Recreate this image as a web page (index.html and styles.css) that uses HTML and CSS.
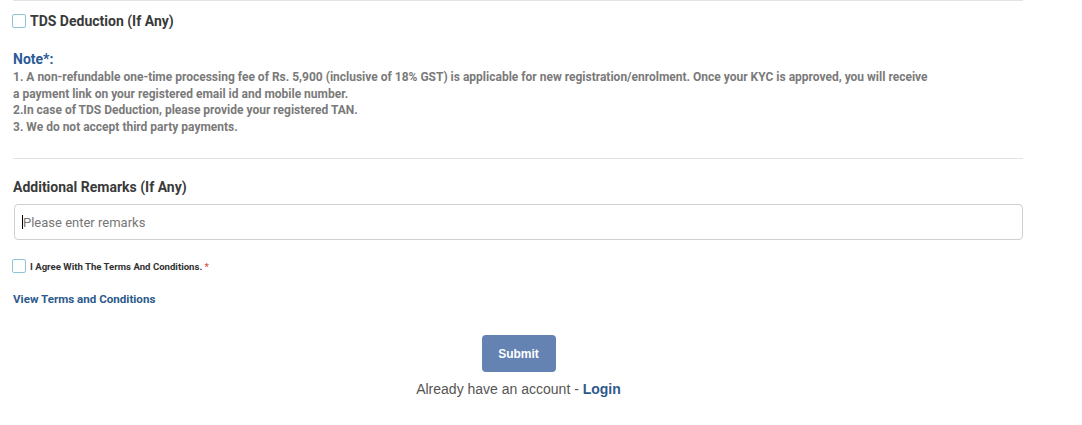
FILE: index.html
```html
<!DOCTYPE html>
<html>
<head>
<meta charset="utf-8">
<link rel="stylesheet" href="styles.css">
</head>
<body>
<div class="form">
  <hr class="rule rule-top">
  <label class="check-row tds">
    <span class="box"></span>
    <span class="tds-label">TDS Deduction (If Any)</span>
  </label>
  <div class="note">
    <h4 class="note-title">Note*:</h4>
    <p class="note-text">1. A non-refundable one-time processing fee of Rs. 5,900 (inclusive of 18% GST) is applicable for new registration/enrolment. Once your KYC is approved, you will receive<br>a payment link on your registered email id and mobile number.<br>2.In case of TDS Deduction, please provide your registered TAN.<br>3. We do not accept third party payments.</p>
  </div>
  <hr class="rule rule-mid">
  <div class="remarks">
    <label class="remarks-label">Additional Remarks (If Any)</label>
    <div class="input"><span class="caret"></span><span class="placeholder">Please enter remarks</span></div>
  </div>
  <label class="check-row agree">
    <span class="box"></span>
    <span class="agree-label">I Agree With The Terms And Conditions. <span class="req">*</span></span>
  </label>
  <a class="terms-link">View Terms and Conditions</a>
  <div class="actions">
    <button class="submit">Submit</button>
    <p class="login-line">Already have an account - <a class="login">Login</a></p>
  </div>
</div>
</body>
</html>
```
FILE: styles.css
```css
html, body {
  margin: 0;
  padding: 0;
  background: #fff;
}
.form {
  width: 1010px;
  margin-left: 13px;
  font-family: Roboto, "Liberation Sans", sans-serif;
}
.rule {
  border: 0;
  margin: 0;
  height: 1px;
  background: #e3e3e3;
}
.check-row {
  display: flex;
  align-items: center;
}
.box {
  box-sizing: border-box;
  width: 14px;
  height: 14px;
  border: 1px solid #8fc3da;
  border-radius: 2px;
  margin-left: -1px;
  margin-right: 4px;
  background: #fff;
}
.tds {
  margin-top: 12px;
  height: 16px;
}
.tds-label {
  font-size: 14px;
  font-weight: 700;
  color: #3a3a3a;
}
.note {
  margin-top: 22px;
}
.note-title {
  margin: 0;
  font-size: 14px;
  font-weight: 700;
  color: #2d5a96;
  line-height: 16px;
}
.note-text {
  margin: 2px 0 0;
  font-size: 12px;
  font-weight: 700;
  color: #7a7a7a;
  line-height: 16.5px;
}
.rule-mid {
  margin-top: 23px;
}
.remarks {
  margin-top: 20px;
}
.remarks-label {
  display: block;
  font-size: 14px;
  font-weight: 700;
  color: #3a3a3a;
  line-height: 16px;
}
.input {
  box-sizing: border-box;
  margin-top: 9px;
  margin-left: 1px;
  height: 36px;
  border: 1px solid #d0d0d0;
  border-radius: 4px;
  display: flex;
  align-items: center;
  padding-left: 7px;
}
.caret {
  width: 1px;
  height: 14px;
  background: #000;
}
.placeholder {
  font-size: 13px;
  color: #777;
}
.agree {
  margin-top: 19px;
  height: 14px;
}
.agree-label {
  font-size: 9.6px;
  font-weight: 700;
  color: #333;
}
.req {
  color: #d9534f;
}
.terms-link {
  display: block;
  margin-top: 20px;
  font-size: 11.6px;
  font-weight: 700;
  color: #2d5a8c;
  line-height: 13px;
}
.actions {
  display: flex;
  flex-direction: column;
  align-items: center;
  margin-top: 29px;
  padding-left: 1px;
}
.submit {
  width: 74px;
  height: 37px;
  border: 0;
  border-radius: 4px;
  background: #6482b2;
  color: #fff;
  font-family: "Liberation Sans", Arial, sans-serif;
  font-size: 12px;
  font-weight: 700;
}
.login-line {
  margin: 9px 0 0;
  font-family: "Liberation Sans", Arial, sans-serif;
  font-size: 14px;
  color: #555;
  line-height: 16px;
}
.login {
  font-weight: 700;
  color: #2d5a8c;
}
```
